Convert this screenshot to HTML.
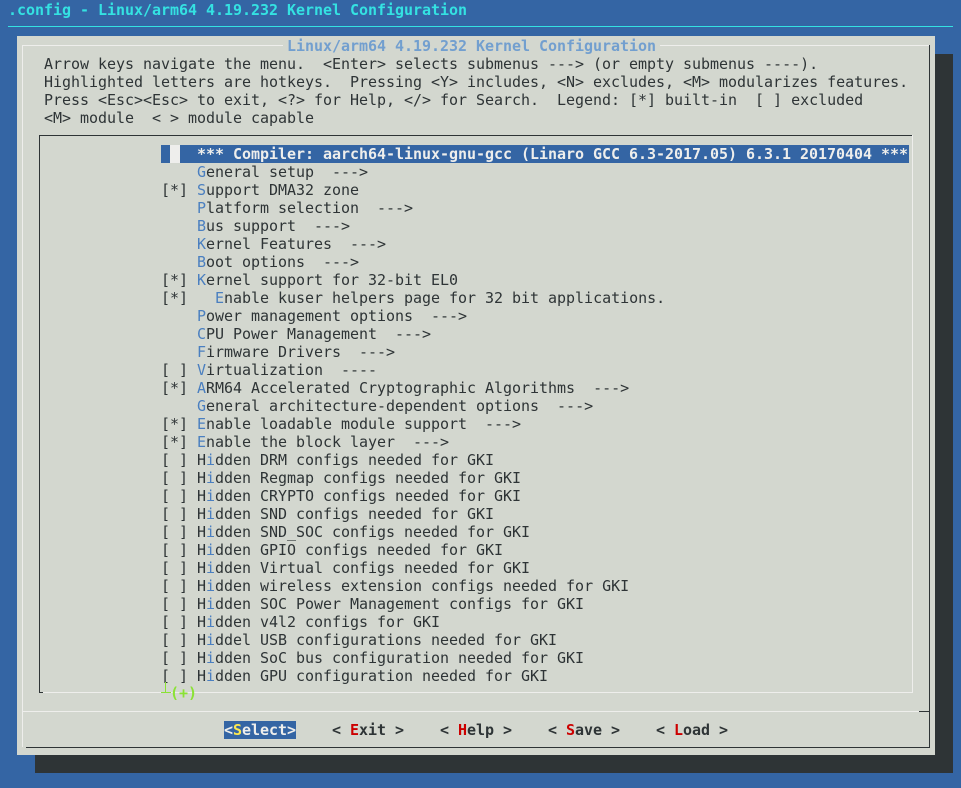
<!DOCTYPE html>
<html><head><meta charset="utf-8"><style>
body{margin:0;width:961px;height:788px;background:#3465a4;position:relative;overflow:hidden;font-family:"DejaVu Sans Mono","Liberation Mono",monospace;font-size:15px;letter-spacing:-0.03px;}
.l{position:absolute;white-space:pre;line-height:18px;height:18px;color:#2e3436;}
.h{color:#4a7fc0;}
.b{font-weight:bold;}
.r{color:#cc0000;}
.abs{position:absolute;}
</style></head><body>
<div class="l b" style="left:8px;top:1px;color:#34e2e2;">.config - Linux/arm64 4.19.232 Kernel Configuration</div>
<div class="abs" style="left:8px;top:26px;width:945px;height:1px;background:#34e2e2;"></div>
<div class="abs" style="left:35px;top:54px;width:918px;height:719px;background:#2e3436;"></div>
<div class="abs" style="left:17px;top:36px;width:918px;height:719px;background:#d3d7cf;"></div>
<div class="abs" style="left:22px;top:45px;width:907px;height:1px;background:#eeeeec;"></div>
<div class="abs" style="left:22px;top:45px;width:1px;height:702px;background:#eeeeec;"></div>
<div class="abs" style="left:929px;top:45px;width:1px;height:703px;background:#2e3436;"></div>
<div class="abs" style="left:26px;top:747px;width:904px;height:1px;background:#2e3436;"></div>
<div class="abs" style="left:22px;top:711px;width:907px;height:1px;background:#eeeeec;"></div>
<div class="abs" style="left:919px;top:711px;width:10px;height:1px;background:#2e3436;"></div>
<div class="l b" style="left:283px;top:37px;background:#d3d7cf;color:#729fcf;padding:0 4px;">Linux/arm64 4.19.232 Kernel Configuration</div>
<div class="l" style="left:44px;top:55px;">Arrow keys navigate the menu.  &lt;Enter&gt; selects submenus ---&gt; (or empty submenus ----).</div>
<div class="l" style="left:44px;top:73px;">Highlighted letters are hotkeys.  Pressing &lt;Y&gt; includes, &lt;N&gt; excludes, &lt;M&gt; modularizes features.</div>
<div class="l" style="left:44px;top:91px;">Press &lt;Esc&gt;&lt;Esc&gt; to exit, &lt;?&gt; for Help, &lt;/&gt; for Search.  Legend: [*] built-in  [ ] excluded</div>
<div class="l" style="left:44px;top:109px;">&lt;M&gt; module  &lt; &gt; module capable</div>
<div class="abs" style="left:39px;top:135px;width:874px;height:1px;background:#2e3436;"></div>
<div class="abs" style="left:39px;top:135px;width:1px;height:558px;background:#2e3436;"></div>
<div class="abs" style="left:912px;top:135px;width:1px;height:558px;background:#eeeeec;"></div>
<div class="abs" style="left:39px;top:692px;width:4px;height:1px;background:#2e3436;"></div>
<div class="abs" style="left:43px;top:692px;width:870px;height:1px;background:#eeeeec;"></div>
<div class="abs" style="left:161px;top:145px;width:748px;height:18px;background:#3465a4;"></div>
<div class="abs" style="left:170px;top:145px;width:10px;height:18px;background:#eeeeec;"></div>
<div class="l b" style="left:197px;top:145px;color:#eeeeec;">*** Compiler: aarch64-linux-gnu-gcc (Linaro GCC 6.3-2017.05) 6.3.1 20170404 ***</div>
<div class="l" style="left:161px;top:163px;">    <span class="h">G</span>eneral setup  ---&gt;</div>
<div class="l" style="left:161px;top:181px;">[*] <span class="h">S</span>upport DMA32 zone</div>
<div class="l" style="left:161px;top:199px;">    <span class="h">P</span>latform selection  ---&gt;</div>
<div class="l" style="left:161px;top:217px;">    <span class="h">B</span>us support  ---&gt;</div>
<div class="l" style="left:161px;top:235px;">    <span class="h">K</span>ernel Features  ---&gt;</div>
<div class="l" style="left:161px;top:253px;">    <span class="h">B</span>oot options  ---&gt;</div>
<div class="l" style="left:161px;top:271px;">[*] <span class="h">K</span>ernel support for 32-bit EL0</div>
<div class="l" style="left:161px;top:289px;">[*]   <span class="h">E</span>nable kuser helpers page for 32 bit applications.</div>
<div class="l" style="left:161px;top:307px;">    <span class="h">P</span>ower management options  ---&gt;</div>
<div class="l" style="left:161px;top:325px;">    <span class="h">C</span>PU Power Management  ---&gt;</div>
<div class="l" style="left:161px;top:343px;">    <span class="h">F</span>irmware Drivers  ---&gt;</div>
<div class="l" style="left:161px;top:361px;">[ ] <span class="h">V</span>irtualization  ----</div>
<div class="l" style="left:161px;top:379px;">[*] <span class="h">A</span>RM64 Accelerated Cryptographic Algorithms  ---&gt;</div>
<div class="l" style="left:161px;top:397px;">    <span class="h">G</span>eneral architecture-dependent options  ---&gt;</div>
<div class="l" style="left:161px;top:415px;">[*] <span class="h">E</span>nable loadable module support  ---&gt;</div>
<div class="l" style="left:161px;top:433px;">[*] <span class="h">E</span>nable the block layer  ---&gt;</div>
<div class="l" style="left:161px;top:451px;">[ ] H<span class="h">i</span>dden DRM configs needed for GKI</div>
<div class="l" style="left:161px;top:469px;">[ ] H<span class="h">i</span>dden Regmap configs needed for GKI</div>
<div class="l" style="left:161px;top:487px;">[ ] H<span class="h">i</span>dden CRYPTO configs needed for GKI</div>
<div class="l" style="left:161px;top:505px;">[ ] H<span class="h">i</span>dden SND configs needed for GKI</div>
<div class="l" style="left:161px;top:523px;">[ ] H<span class="h">i</span>dden SND_SOC configs needed for GKI</div>
<div class="l" style="left:161px;top:541px;">[ ] H<span class="h">i</span>dden GPIO configs needed for GKI</div>
<div class="l" style="left:161px;top:559px;">[ ] H<span class="h">i</span>dden Virtual configs needed for GKI</div>
<div class="l" style="left:161px;top:577px;">[ ] H<span class="h">i</span>dden wireless extension configs needed for GKI</div>
<div class="l" style="left:161px;top:595px;">[ ] H<span class="h">i</span>dden SOC Power Management configs for GKI</div>
<div class="l" style="left:161px;top:613px;">[ ] H<span class="h">i</span>dden v4l2 configs for GKI</div>
<div class="l" style="left:161px;top:631px;">[ ] H<span class="h">i</span>ddel USB configurations needed for GKI</div>
<div class="l" style="left:161px;top:649px;">[ ] H<span class="h">i</span>dden SoC bus configuration needed for GKI</div>
<div class="l" style="left:161px;top:667px;">[ ] H<span class="h">i</span>dden GPU configuration needed for GKI</div>
<div class="abs" style="left:165px;top:682px;width:1px;height:11px;background:#8ae234;"></div>
<div class="abs" style="left:161px;top:692px;width:10px;height:1px;background:#8ae234;"></div>
<div class="l b" style="left:170px;top:684px;color:#8ae234;">(+)</div>
<div class="l b" style="left:224px;top:721px;background:#3465a4;color:#eeeeec;">&lt;<span style="color:#fce94f">S</span>elect&gt;</div>
<div class="l b" style="left:332px;top:721px;">&lt; <span class="r">E</span>xit &gt;</div>
<div class="l b" style="left:440px;top:721px;">&lt; <span class="r">H</span>elp &gt;</div>
<div class="l b" style="left:548px;top:721px;">&lt; <span class="r">S</span>ave &gt;</div>
<div class="l b" style="left:656px;top:721px;">&lt; <span class="r">L</span>oad &gt;</div>
</body></html>
